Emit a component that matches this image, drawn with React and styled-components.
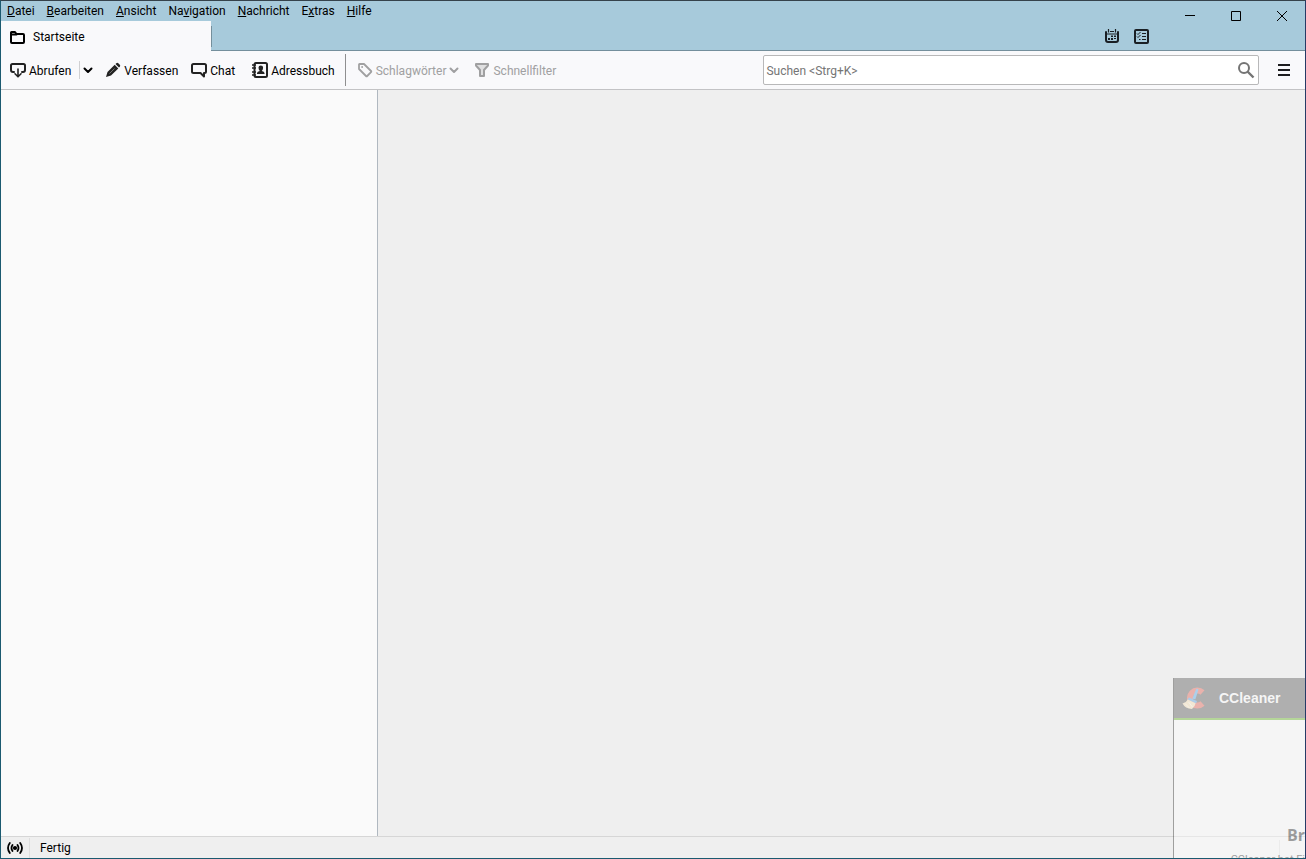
import React from 'react';
import styled, { createGlobalStyle } from 'styled-components';

const GlobalStyle = createGlobalStyle`
	*, *:before, *:after {
		box-sizing: border-box;
	}

	body {
		margin: 0;
		font: 12px/16px Roboto, "Open Sans", sans-serif;
		color: #000;
	}

	button, input {
		font: inherit;
		color: inherit;
	}
`;

const Window = styled.div`
	position: relative;
	display: flex;
	flex-direction: column;
	height: 100vh;
	overflow: hidden;
	background: #efefef;
	border: 1px solid #1b5a70;
	border-top-color: #35424b;
	border-right-color: #263b66;
`;

const TitleBar = styled.header`
	display: flex;
	justify-content: space-between;
	height: 50px;
	flex: none;
	background: #a7cadb;
	border-bottom: 1px solid #748f9c;
`;

const TitleLeft = styled.div`
	display: flex;
	flex-direction: column;
`;

const MenuBar = styled.nav`
	display: flex;
	height: 20px;
`;

const MenuItem = styled.button`
	height: 20px;
	padding: 0 6px;
	border: 0;
	background: none;
	line-height: 20px;
`;

const Tab = styled.button`
	position: relative;
	display: flex;
	align-items: center;
	gap: 8px;
	width: 210px;
	height: 30px;
	margin-bottom: -1px;
	padding: 2px 8px 0;
	border: 0;
	background: #f9f9fb;

	&:after {
		content: '';
		position: absolute;
		top: 5px;
		bottom: 4px;
		left: 100%;
		width: 1px;
		background: #748f9c;
	}
`;

const TitleRight = styled.div`
	display: flex;
`;

const TabTools = styled.div`
	display: flex;
	align-items: flex-end;
	gap: 13px;
	padding: 0 18px 6px 0;
`;

const IconButton = styled.button`
	display: flex;
	align-items: center;
	justify-content: center;
	width: ${props => props.$width || 16}px;
	height: ${props => props.$height || 16}px;
	padding: 0;
	border: 0;
	background: none;
`;

const Toolbar = styled.div`
	display: flex;
	align-items: center;
	height: 39px;
	flex: none;
	background: #f9f9fb;
	border-bottom: 1px solid #c3c3c5;
`;

const ToolButton = styled.button`
	display: flex;
	align-items: center;
	gap: 3px;
	height: 32px;
	margin-right: ${props => props.$gap || 0}px;
	padding: 0 0 0 9px;
	border: 0;
	background: none;
	white-space: nowrap;

	svg {
		color: #222;
	}

	&:disabled, &:disabled svg {
		color: #a0a0a1;
	}
`;

const Label = styled.span`
	padding-top: 2px;
`;

const Divider = styled.div`
	width: 1px;
	height: ${props => props.$height}px;
	margin-right: ${props => props.$gap || 0}px;
	background: ${props => props.$color};
`;

const Search = styled.label`
	display: flex;
	align-items: center;
	width: 38%;
	height: 30px;
	margin-left: auto;
	margin-right: 13px;
	padding: 0 3px 0 2px;
	background: #fff;
	border: 1px solid #b8b8b9;
	border-radius: 2px;
`;

const SearchInput = styled.input`
	flex: 1;
	min-width: 0;
	padding: 2px 0 0;
	border: 0;
	outline: 0;
	background: none;

	&::placeholder {
		color: #757575;
		opacity: 1;
	}
`;

const MenuButton = styled(IconButton)`
	margin-right: 9px;
`;

const Main = styled.main`
	display: flex;
	flex: 1;
	min-height: 0;
`;

const Folders = styled.aside`
	width: 377px;
	background: #fafafa;
	border-right: 1px solid #b0b8c0;
`;

const StatusBar = styled.footer`
	display: flex;
	align-items: center;
	height: 22px;
	flex: none;
	border-top: 1px solid #d6d6d6;
`;

const StatusText = styled.span`
	flex: 1;
	padding-left: 10px;
`;

const Popup = styled.section`
	position: absolute;
	right: 0;
	bottom: 0;
	width: 132px;
	height: 180px;
	overflow: hidden;
	opacity: 0.4;
	background: #fff;
	border-left: 1px solid #2a2a26;
	color: #222;
`;

const PopupHeader = styled.div`
	display: flex;
	align-items: center;
	gap: 12px;
	height: 42px;
	margin-left: -1px;
	padding-left: 9px;
	background: #505050;
	border-bottom: 2px solid #5fb11b;
	color: #fff;
	font: bold 14px/20px "Liberation Sans", sans-serif;
`;

const PopupBody = styled.div`
	display: flex;
	flex-direction: column;
	align-items: flex-end;
	padding-top: 104px;
	white-space: nowrap;
`;

const PopupTitle = styled.strong`
	font: bold 16px/22px "Open Sans", sans-serif;
`;

const PopupText = styled.span`
	padding-top: 6px;
	font-size: 11px;
`;

const stroke = {
	fill: 'none',
	stroke: 'currentColor',
	strokeWidth: 2,
	strokeLinejoin: 'round',
	strokeLinecap: 'round',
};

const Icon = ({ size = 16, children, ...rest }) => (
	<svg width={size} height={size} viewBox={`0 0 ${size} ${size}`} aria-hidden="true" {...rest}>
		{children}
	</svg>
);

const FolderIcon = () => (
	<Icon {...stroke}>
		<path d="M2 13V3.5Q2 3 2.5 3H6l1.5 2H14q1 0 1 1v7q0 1-1 1H3q-1 0-1-1zM2 5.5h5.5" />
	</Icon>
);

const FetchIcon = () => (
	<Icon {...stroke}>
		<path d="M4 10H3Q1 10 1 8V3.500Q1 2 2.500 2h11Q15 2 15 3.500V8q0 2-2 2h-1" />
		<path d="M8 7v7.500M5 11.800l3 3 3-3" strokeWidth="1.600" />
	</Icon>
);

const ChevronIcon = () => (
	<Icon size={10} {...stroke}>
		<path d="M1.500 3.500 5 7l3.500-3.500" />
	</Icon>
);

const PencilIcon = () => (
	<Icon fill="currentColor">
		<path d="M1 15l1.500-5 7.200-7.200 3.600 3.600L6 13.500zM10.500 2l.8-.8q1-.9 2 0l1.500 1.500q.9 1 0 2l-.8.8z" />
		<path d="M4.500 11.500l5-5" stroke="#888" strokeWidth="0.8" />
	</Icon>
);

const ChatIcon = () => (
	<Icon {...stroke}>
		<path d="M2.500 2h11Q15 2 15 3.500v6q0 1.500-1.500 1.500H13v3.500L9.500 11h-7Q1 11 1 9.500v-6Q1 2 2.500 2z" />
	</Icon>
);

const BookIcon = () => (
	<Icon>
		<rect x="2.500" y="1" width="12.500" height="14" rx="1.500" {...stroke} />
		<path d="M0 3h4M0 6h4M0 10h4M0 13h4" stroke="currentColor" strokeWidth="1.500" />
		<path d="M5 12v-1q.3-1.500 2.800-2Q6.500 7.500 6.500 5.500q0-2 2.300-2t2.300 2q0 2-1.300 3.500 2.500.5 2.700 2v1z" fill="currentColor" />
	</Icon>
);

const TagIcon = () => (
	<Icon {...stroke} strokeWidth="1.800">
		<path d="M2 2.500Q2 2 2.500 2H7l7 7q.6.6 0 1.200L10.200 14q-.6.6-1.200 0L2 7z" />
		<circle cx="5" cy="5" r="0.5" strokeWidth="1" />
	</Icon>
);

const FilterIcon = () => (
	<Icon {...stroke}>
		<path d="M2 2h12v1.500L10 8v6H6V8L2 3.500z" fill="#e0e0e1" />
	</Icon>
);

const SearchIcon = () => (
	<Icon size={18} fill="none" stroke="#747474" strokeWidth="2">
		<circle cx="7" cy="7" r="5" />
		<path d="M10.500 10.500 16.500 16.500" strokeWidth="2.400" />
	</Icon>
);

const CalendarIcon = () => (
	<Icon color="#1a1f24">
		<path d="M2 4v8q0 2 2 2h8q2 0 2-2V4" {...stroke} />
		<path d="M4.500 1v3.500M11.500 1v3.500M6 3.500h4M2 6h12" stroke="currentColor" strokeWidth="1.200" />
		<path d="M7 7.500h2v1.500H7zM10 7.500h2v1.500h-2zM4 10h2v2H4zM7 10h2v2H7zM10 10h2v1h-2z" fill="currentColor" />
	</Icon>
);

const TasksIcon = () => (
	<Icon color="#1a1f24">
		<rect x="2" y="2" width="13" height="13" rx="1" {...stroke} />
		<path d="M9 5.500h4M9 8.500h4M9 11.500h4M4 5.500l1 1 2.500-2.500M4 8.500l1 1L7.500 7M6 11.500h1.500" fill="none" stroke="currentColor" />
	</Icon>
);

const OnlineIcon = () => (
	<Icon {...stroke} strokeWidth="1.800">
		<circle cx="8" cy="8" r="1.200" fill="currentColor" />
		<path d="M5.500 5q-2 3 0 6M10.500 5q2 3 0 6M2.800 3Q-.8 8 2.800 13M13.200 3q3.600 5 0 10" />
	</Icon>
);

const CCleanerLogo = () => (
	<Icon size={25}>
		<path d="M20.500 6.500a7.500 7.500 0 1 0 0 11" fill="none" stroke="#e2594a" strokeWidth="6" />
		<path d="M14.200 3q1.600-.8 2.300.6l-3.200 10-3-1.200z" fill="#4aa3e6" />
		<path d="M7 11.500l8 3.500-1 2.500L5.500 13.500z" fill="#4a9be0" />
		<path d="M5.800 13.500l7.800 3.800q-.5 3.500-3.600 5.700-7-.5-9.500-5.500 3.800-.8 5.300-4z" fill="#f6dcae" />
		<path d="M3 17.500l4.500 4.500M6.500 16l4 5" stroke="#fff4dc" />
	</Icon>
);

// [text before the access key, access key, rest]
const menus = [
	['', 'D', 'atei'],
	['', 'B', 'earbeiten'],
	['', 'A', 'nsicht'],
	['Na', 'v', 'igation'],
	['', 'N', 'achricht'],
	['E', 'x', 'tras'],
	['', 'H', 'ilfe'],
];

const App = () => (
	<React.Fragment>
		<GlobalStyle />
		<Window>
			<TitleBar>
				<TitleLeft>
					<MenuBar>
						{menus.map(([before, key, after]) => (
							<MenuItem key={before + key + after}>{before}<u>{key}</u>{after}</MenuItem>
						))}
					</MenuBar>
					<Tab><FolderIcon />Startseite</Tab>
				</TitleLeft>
				<TitleRight>
					<TabTools>
						<IconButton aria-label="Kalender"><CalendarIcon /></IconButton>
						<IconButton aria-label="Aufgaben"><TasksIcon /></IconButton>
					</TabTools>
					<IconButton $width={46} $height={30} aria-label="Minimieren">
						<Icon size={10}><path d="M0 4.500h10" stroke="#000" /></Icon>
					</IconButton>
					<IconButton $width={46} $height={30} aria-label="Maximieren">
						<Icon size={10}><path d="M.5.5h9v9h-9z" fill="none" stroke="#000" /></Icon>
					</IconButton>
					<IconButton $width={46} $height={30} aria-label="Schließen">
						<Icon size={10}><path d="M0 0l10 10M10 0L0 10" stroke="#000" /></Icon>
					</IconButton>
				</TitleRight>
			</TitleBar>

			<Toolbar>
				<ToolButton $gap={8}><FetchIcon /><Label>Abrufen</Label></ToolButton>
				<Divider $height={18} $color="#d0d0d2" />
				<IconButton $width={16} $height={24} aria-label="Abrufen-Optionen"><ChevronIcon /></IconButton>
				<ToolButton $gap={4}><PencilIcon /><Label>Verfassen</Label></ToolButton>
				<ToolButton $gap={8}><ChatIcon /><Label>Chat</Label></ToolButton>
				<ToolButton $gap={10}><BookIcon /><Label>Adressbuch</Label></ToolButton>
				<Divider $height={32} $gap={2} $color="#8f8f90" />
				<ToolButton $gap={6} disabled><TagIcon /><Label>Schlagwörter</Label><ChevronIcon /></ToolButton>
				<ToolButton disabled><FilterIcon /><Label>Schnellfilter</Label></ToolButton>
				<Search>
					<SearchInput type="text" aria-label="Suchen" placeholder="Suchen <Strg+K>" />
					<SearchIcon />
				</Search>
				<MenuButton $width={24} $height={24} aria-label="Menü">
					<Icon><path d="M2 3h12M2 8h12M2 13h12" stroke="#1d1d1f" strokeWidth="2" /></Icon>
				</MenuButton>
			</Toolbar>

			<Main>
				<Folders />
			</Main>

			<StatusBar>
				<IconButton $width={28} $height={16} aria-label="Online"><OnlineIcon /></IconButton>
				<Divider $height={20} $color="#dedede" />
				<StatusText>Fertig</StatusText>
				<Divider $height={16} $gap={25} $color="#dedede" />
			</StatusBar>

			<Popup>
				<PopupHeader><CCleanerLogo />CCleaner</PopupHeader>
				<PopupBody>
					<PopupTitle>Br</PopupTitle>
					<PopupText>CCleaner hat Fi</PopupText>
				</PopupBody>
			</Popup>
		</Window>
	</React.Fragment>
);

export default App;
